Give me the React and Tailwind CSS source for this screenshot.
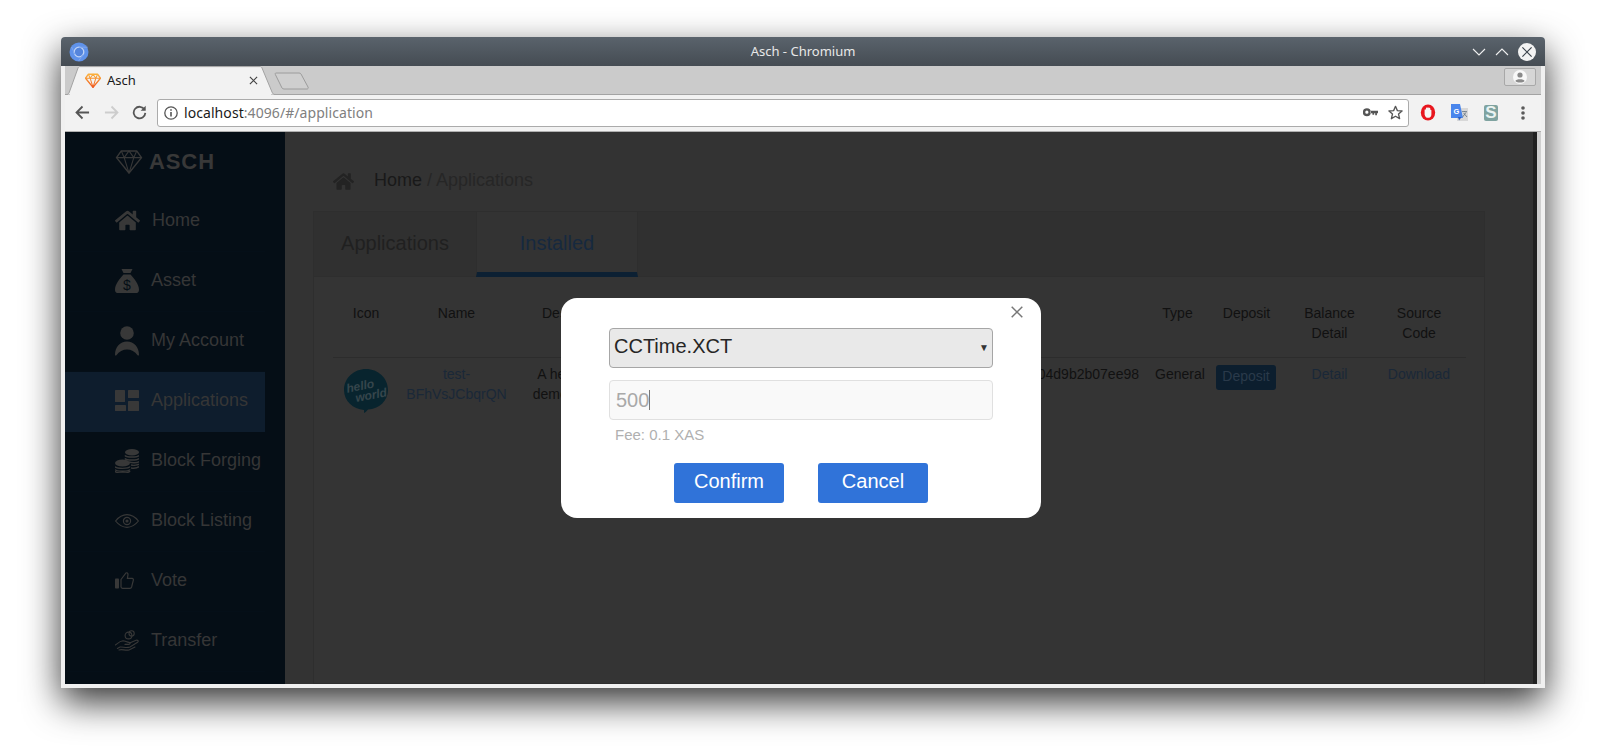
import React from "react";
import { FaHome } from "react-icons/fa";

const chromeFont = { fontFamily: '"Noto Sans", sans-serif' };

function Gem({ className, stroke, width = 1.5 }) {
  return (
    <svg viewBox="0 0 28 26" className={className} fill="none" stroke={stroke} strokeWidth={width} strokeLinejoin="round">
      <defs>
        <linearGradient id="gemGrad" x1="0" y1="0" x2="0" y2="1">
          <stop offset="0" stopColor="#fbb03b" />
          <stop offset="1" stopColor="#f0591f" />
        </linearGradient>
      </defs>
      <path d="M6 2 H22 L27 9 L14 25 L1 9 Z" />
      <path d="M1 9 H27 M9 9 L14 2 L19 9 M9 9 L14 25 L19 9 M6 2 L9 9 M22 2 L19 9" strokeWidth={width * 0.75} />
    </svg>
  );
}

const iconCls = "w-[24px] h-[24px] shrink-0";
const ic = "#383838";

function BagIcon() {
  return (
    <svg viewBox="0 0 24 24" className={iconCls} fill={ic}>
      <path d="M6.5 0 H17.5 L15.5 4 H8.5 Z" />
      <path d="M8.5 5.5 H15.5 C19 9.5 24 15 24 20.5 C24 22.5 23.5 23.5 22 24 H2 C.5 23.5 0 22.5 0 20.5 C0 15 5 9.5 8.5 5.5 Z" />
      <text x="12" y="21" textAnchor="middle" fontSize="14" fill="#050e16" fontFamily="Liberation Sans">$</text>
    </svg>
  );
}
function UserIcon() {
  return (
    <svg viewBox="0 0 24 30" className="w-[24px] h-[30px] shrink-0" fill={ic}>
      <circle cx="12" cy="7" r="6.8" />
      <path d="M0 29 C0 21 5 15.5 12 15.5 C19 15.5 24 21 24 29 C24 29.6 23 29.8 22.6 29.2 C20 25.5 16 23.5 12 23.5 C8 23.5 4 25.5 1.4 29.2 C1 29.8 0 29.6 0 29 Z" />
    </svg>
  );
}
function AppsIcon() {
  return (
    <svg viewBox="0 0 24 21" className="w-[24px] h-[21px] shrink-0" fill={ic}>
      <rect x="0" y="0" width="10" height="12" rx=".6" />
      <rect x="0" y="15" width="11" height="6" rx=".6" />
      <rect x="13" y="0" width="11" height="8" rx=".6" />
      <rect x="13" y="11" width="11" height="10" rx=".6" />
    </svg>
  );
}
function CoinsIcon() {
  return (
    <svg viewBox="0 0 24 24" className={iconCls} fill="none" stroke={ic} strokeWidth="1.4">
      <ellipse cx="17" cy="3.2" rx="7" ry="3.2" fill={ic} stroke="none" />
      <path d="M10 6.4 C11 8.6 23 8.6 24 6.4 M10 9.4 C11 11.6 23 11.6 24 9.4 M14 13 C17 14.2 23 14 24 12.4 M16 16 C19 16.8 23 16 24 15 M16 19 C19 19.4 23 18.6 24 17.6" />
      <ellipse cx="7.5" cy="14" rx="7.5" ry="3.6" fill={ic} stroke="none" />
      <path d="M0 17.6 C1 20 14 20 15 17.6 M0 20.4 C1 22.8 14 22.8 15 20.4 M0 22 C1 24.6 14 24.6 15 22" />
    </svg>
  );
}
function EyeIcon() {
  return (
    <svg viewBox="0 0 24 14" className="w-[24px] h-[14px] shrink-0" fill="none" stroke={ic} strokeWidth="1.2">
      <path d="M.6 7 C5 1.4 8.5 .7 12 .7 C15.5 .7 19 1.4 23.4 7 C19 12.6 15.5 13.3 12 13.3 C8.5 13.3 5 12.6 .6 7 Z" />
      <circle cx="12" cy="7" r="3.6" />
      <circle cx="12" cy="7" r="1" fill={ic} />
    </svg>
  );
}
function ThumbIcon() {
  return (
    <svg viewBox="0 0 19 17" className="w-[19px] h-[17px] shrink-0 mr-[5px]">
      <rect x="0" y="6.5" width="4" height="10" rx=".8" fill={ic} />
      <path d="M6 7.5 L11 1 C12 .4 13 1 13 2.5 L12.4 6.4 H17 C18.2 6.4 18.6 7.4 18.3 8.4 L16.6 15 C16.3 15.9 15.7 16.3 15 16.3 H7.6 C6.6 16.3 6 15.7 6 14.8 Z" fill="none" stroke={ic} strokeWidth="1.2" />
    </svg>
  );
}
function HandIcon() {
  return (
    <svg viewBox="0 0 24 21" className="w-[24px] h-[21px] shrink-0" fill="none" stroke={ic} strokeWidth="1.1" strokeLinecap="round">
      <circle cx="13.5" cy="5.5" r="3.4" />
      <circle cx="16.6" cy="3.4" r="2.6" />
      <path d="M.4 15 C3 13 5 11 8 10.8 C10 10.8 12 12.4 14 12.4 C15.6 12.4 15.6 14.4 13.6 14.4 H10" />
      <path d="M14.6 13 L21 10.2 C23 9.8 23.8 11.2 22.6 12.2 L15 17 C11 18.4 8 16.6 5 17 L2.4 18.4" />
      <path d="M4 20 C7 18.8 10 20.8 14 20 L20 17" />
    </svg>
  );
}

const navItems = [
  ["Home", <FaHome key="h" className="w-[25px] h-[25px] shrink-0" color={ic} />],
  ["Asset", <BagIcon key="a" />],
  ["My Account", <UserIcon key="u" />],
  ["Applications", <AppsIcon key="p" />],
  ["Block Forging", <CoinsIcon key="c" />],
  ["Block Listing", <EyeIcon key="e" />],
  ["Vote", <ThumbIcon key="t" />],
  ["Transfer", <HandIcon key="r" />],
];

function Sidebar() {
  return (
    <aside className="w-[220px] shrink-0 bg-[#050e16] overflow-hidden">
      <div className="h-[60px] pl-[50px] pb-[2px] flex items-center gap-[6px]">
        <Gem className="w-[28px] h-[25px] shrink-0" stroke="#383838" />
        <span className="text-[22px] font-bold text-[#383838] tracking-[0.9px]">ASCH</span>
      </div>
      {navItems.map(([label, icon]) => (
        <div
          key={label}
          className={
            "h-[60px] w-[200px] pl-[50px] pb-[2px] flex items-center gap-[12px] text-[18px] whitespace-nowrap text-[#363636] border-b " +
            (label === "Applications" ? "bg-[#0e1d2d] border-[#0e1d2d]" : "border-[#050f18]")
          }
        >
          {icon}
          <span>{label}</span>
        </div>
      ))}
    </aside>
  );
}

function HelloLogo() {
  return (
    <svg viewBox="0 0 44 44" className="w-[44px] h-[44px] mx-auto mt-[5px]">
      <path d="M22 0 C34 0 44 9 44 21 C44 32 35 40 24 40.5 C23 42 21 43.5 20 44 L20 41 C9 40 0 32 0 21 C0 9 10 0 22 0 Z" fill="#08242e" />
      <g transform="rotate(-11 22 21)" fill="#36464c" fontFamily="Liberation Sans" fontWeight="700" fontStyle="italic" fontSize="12">
        <text x="3" y="20">hello</text>
        <text x="10" y="31">world</text>
      </g>
    </svg>
  );
}

const colHead = "px-[8px] pt-[8px] pb-[14px] font-normal align-top text-center";
const cell = "px-[8px] pt-[6px] align-top text-center";
const link = "text-[#1a2838]";

function AppTable() {
  return (
    <table className="table-fixed w-[1133px] text-[14px] leading-[20px] text-[#111111]">
      <colgroup>
        <col className="w-[66px]" />
        <col className="w-[115px]" />
        <col className="w-[126px]" />
        <col className="w-[507px]" />
        <col className="w-[61px]" />
        <col className="w-[77px]" />
        <col className="w-[89px]" />
        <col className="w-[92px]" />
      </colgroup>
      <thead>
        <tr className="border-b border-[#2c2c2c]">
          <th className={colHead}>Icon</th>
          <th className={colHead}>Name</th>
          <th className={colHead}>Description</th>
          <th className={colHead}>Transaction ID</th>
          <th className={colHead}>Type</th>
          <th className={colHead}>Deposit</th>
          <th className={colHead}>Balance Detail</th>
          <th className={colHead + " !pr-[10px]"}>Source Code</th>
        </tr>
      </thead>
      <tbody>
        <tr>
          <td className={cell}><HelloLogo /></td>
          <td className={cell + " !px-0 " + link}>test-BFhVsJCbqrQN</td>
          <td className={cell}>A hello world demo for asch</td>
          <td className={cell + " text-right whitespace-nowrap"}>04d9b2b07ee98</td>
          <td className={cell + " !px-0 !pl-[5px] whitespace-nowrap"}>General</td>
          <td className={cell}>
            <span className="inline-block w-[60px] h-[25px] -ml-[1px] mt-[1px] leading-[19px] pt-[2px] rounded-[3px] bg-[#0c1e2e] text-[#2a3a4a]">Deposit</span>
          </td>
          <td className={cell + " " + link}>Detail</td>
          <td className={cell + " !pr-[10px] " + link}>Download</td>
        </tr>
      </tbody>
    </table>
  );
}

function MainArea() {
  return (
    <main className="flex-1 min-w-0 bg-[#333333] pl-[28px] pr-[48px] overflow-hidden">
      <div className="h-[79px] pt-[19px] pl-[20px] flex items-center gap-[20px] text-[18px]">
        <FaHome className="w-[21px] h-[21px]" color="#232323" />
        <div className="-mt-[1px]">
          <span className="text-[#191919]">Home</span>
          <span className="text-[#262626]"> / Applications</span>
        </div>
      </div>
      <section className="h-[473px] bg-[#343434] border border-[#2e2e2e]">
        <div className="h-[65px] bg-[#303030] border-b border-[#2e2e2e] flex text-[20px]">
          <div className="w-[162px] flex items-center justify-center pb-[2px] text-[#202020]">Applications</div>
          <div className="w-[162px] h-[65px] flex items-center justify-center pt-[1px] bg-[#333333] border-x border-[#2e2e2e] border-b-[5px] border-b-[#0c2033] text-[#16293f]">Installed</div>
        </div>
        <div className="pt-[18px] pl-[19px]">
          <AppTable />
        </div>
      </section>
    </main>
  );
}

function Modal() {
  return (
    <div className="relative w-[480px] h-[220px] bg-white rounded-[16px] px-[48px] pt-[30px] flex flex-col" style={{ fontFamily: '"Liberation Sans", sans-serif' }}>
      <svg viewBox="0 0 12 12" className="absolute right-[18px] top-[8px] w-[12px] h-[12px]" stroke="#777" strokeWidth="1.5">
        <path d="M.7 .7 L11.3 11.3 M11.3 .7 L.7 11.3" />
      </svg>
      <div className="h-[40px] rounded-[4px] border border-[#a6a6a6] bg-[#e9e9e9] flex items-center justify-between pl-[4px] pr-[3px] pb-[5px] text-[20px] text-[#262626]">
        <span>CCTime.XCT</span>
        <span className="text-[10px] leading-none mt-[5px] text-[#333]">▼</span>
      </div>
      <div className="mt-[12px] h-[40px] rounded-[4px] border border-[#e0e0e0] bg-[#f9f9f9] flex items-center pl-[6px] pb-[1px] text-[20px] text-[#a9a9a9]">
        <span>500</span>
        <span className="w-px h-[20px] bg-[#777]" />
      </div>
      <div className="mt-[6px] pl-[6px] text-[15px] leading-[18px] text-[#b0b0b0]">Fee: 0.1 XAS</div>
      <div className="mt-[19px] flex justify-center gap-[34px]">
        <div className="w-[110px] h-[40px] rounded-[3px] bg-[#3073d9] text-white text-[20px] flex items-center justify-center pb-[5px]">Confirm</div>
        <div className="w-[110px] h-[40px] rounded-[3px] bg-[#3073d9] text-white text-[20px] flex items-center justify-center pb-[5px]">Cancel</div>
      </div>
    </div>
  );
}

function TitleBar() {
  return (
    <div className="relative h-[29px] shrink-0 rounded-t-[4px] bg-gradient-to-b from-[#5a636c] to-[#454c53] flex items-center justify-between pl-[8px] pr-[9px]">
      <svg viewBox="0 0 20 20" className="w-[20px] h-[20px]">
        <circle cx="10" cy="10" r="9.5" fill="#5f92ea" />
        <circle cx="10" cy="10" r="4.8" fill="#5585dc" stroke="#c0d4f6" strokeWidth="1.3" />
        <path d="M10 5.2 H18.6 M6 12.6 L2.6 5 M14 12.6 L9.6 19" stroke="#7fa6ec" strokeWidth="1" />
      </svg>
      <div className="absolute inset-x-0 text-center text-[13px] text-[#e8e8e8]" style={chromeFont}>Asch - Chromium</div>
      <div className="relative flex items-center gap-[9px]">
        <svg viewBox="0 0 14 8" className="w-[14px] h-[8px]" fill="none" stroke="#f0f0f0" strokeWidth="1.1"><path d="M1 1 L7 7 L13 1" /></svg>
        <svg viewBox="0 0 14 8" className="w-[14px] h-[8px]" fill="none" stroke="#f0f0f0" strokeWidth="1.1"><path d="M1 7 L7 1 L13 7" /></svg>
        <svg viewBox="0 0 18 18" className="w-[18px] h-[18px]">
          <circle cx="9" cy="9" r="9" fill="#f2f2f2" />
          <path d="M4.4 4.4 L13.6 13.6 M13.6 4.4 L4.4 13.6" stroke="#3c444c" strokeWidth="1.2" />
        </svg>
      </div>
    </div>
  );
}

function TabStrip() {
  return (
    <div className="relative h-[29px] shrink-0 bg-[#cbcbcb] border-b border-[#a3a3a3] flex">
      <div className="relative w-[212px] h-[29px] flex items-center pl-[20px] -mb-px">
        <svg viewBox="0 0 212 29" className="absolute left-0 top-0 w-[212px] h-[29px]">
          <path d="M0 28.5 H1 C3 28.5 3.6 28 4.4 26 L13 2 C13.5 1 14 .6 15 .6 H195 C196 .6 196.5 1 197 2 L207 26 C207.8 28 208.6 28.5 211 28.5" fill="#f2f2f2" stroke="#a3a3a3" />
          <rect x="5" y="27" width="201" height="2" fill="#f2f2f2" />
        </svg>
        <Gem className="relative w-[16px] h-[15px]" stroke="url(#gemGrad)" width={2.4} />
        <span className="relative ml-[6px] text-[13px] text-[#1a1a1a]" style={chromeFont}>Asch</span>
        <svg viewBox="0 0 10 10" className="absolute left-[184px] top-[10px] w-[9px] h-[9px]" stroke="#444" strokeWidth="1.3">
          <path d="M1 1 L9 9 M9 1 L1 9" />
        </svg>
      </div>
      <svg viewBox="0 0 36 18" className="absolute left-[209px] top-[6px] w-[36px] h-[18px]" fill="#cfcfcf" stroke="#9c9c9c">
        <path d="M2 1 H25 C26 1 26.6 1.4 27 2 L34 15 C34.6 16.2 34 17 33 17 H10 C9 17 8.4 16.6 8 16 L1.4 2.6 C1 1.6 1.2 1 2 1 Z" />
      </svg>
      <div className="ml-auto mr-[5px] mt-[2px] w-[32px] h-[18px] rounded-[2px] bg-[#d6d6d6] border border-[#a8a8a8] flex items-center justify-center">
        <svg viewBox="0 0 14 14" className="w-[14px] h-[14px]">
          <circle cx="7" cy="7" r="7" fill="#f8f8f8" />
          <circle cx="7" cy="5" r="2.6" fill="#8a8a8a" />
          <path d="M2.4 11 C3 8.6 11 8.6 11.6 11 C10 13 4 13 2.4 11 Z" fill="#8a8a8a" />
        </svg>
      </div>
    </div>
  );
}

function Toolbar() {
  return (
    <div className="h-[37px] shrink-0 bg-[#f2f2f2] border-b border-[#b0b0b0] flex items-center pl-[10px] pb-[1px]">
      <svg viewBox="0 0 16 16" className="w-[15px] h-[15px]" fill="none" stroke="#555" strokeWidth="1.9">
        <path d="M15 8 H2 M8 1.6 L1.6 8 L8 14.4" />
      </svg>
      <svg viewBox="0 0 16 16" className="w-[15px] h-[15px] ml-[14px]" fill="none" stroke="#cdcdcd" strokeWidth="1.9">
        <path d="M1 8 H14 M8 1.6 L14.4 8 L8 14.4" />
      </svg>
      <svg viewBox="0 0 16 16" className="w-[15px] h-[15px] ml-[13px]" fill="none" stroke="#555" strokeWidth="1.9">
        <path d="M13.4 5 A6.2 6.2 0 1 0 14.2 8.4" />
        <path d="M14.6 .8 V6.2 H9.2 Z" fill="#555" stroke="none" />
      </svg>
      <div className="ml-[10px] w-[1252px] h-[28px] bg-white border border-[#ababab] rounded-[3px] flex items-center pl-[6px] pr-[5px]">
        <svg viewBox="0 0 14 14" className="w-[14px] h-[14px] shrink-0" fill="none" stroke="#555" strokeWidth="1.3">
          <circle cx="7" cy="7" r="6.2" />
          <path d="M7 6 V10.6 M7 3.2 V4.8" strokeWidth="1.6" />
        </svg>
        <div className="ml-[6px] text-[14px] flex-1 whitespace-nowrap tracking-[0.07px]" style={chromeFont}>
          <span className="text-[#1a1a1a]">localhost</span>
          <span className="text-[#808080]">:4096/#/application</span>
        </div>
        <svg viewBox="0 0 14 8" className="w-[15px] h-[9px] -ml-[1px] shrink-0" fill="#555">
          <path d="M3.6 0 A3.6 3.6 0 1 1 3.6 7.4 A3.6 3.6 0 1 1 3.6 0 Z M3.6 2.2 A1.5 1.5 0 1 0 3.6 5.2 A1.5 1.5 0 1 0 3.6 2.2 Z M6.8 2.4 H14 V4.6 H13 V6.6 H11.4 V4.6 H10.4 V6 H8.8 V4.6 H6.8 Z" fillRule="evenodd" />
        </svg>
        <svg viewBox="0 0 16 16" className="w-[15px] h-[15px] ml-[10px] shrink-0" fill="none" stroke="#555" strokeWidth="1.4" strokeLinejoin="round">
          <path d="M8 1.4 L10 6 L15 6.4 L11.2 9.6 L12.4 14.6 L8 12 L3.6 14.6 L4.8 9.6 L1 6.4 L6 6 Z" />
        </svg>
      </div>
      <svg viewBox="0 0 16 18" className="w-[16px] h-[17px] ml-[11px] shrink-0">
        <ellipse cx="8" cy="9" rx="7.6" ry="8.6" fill="#e8171f" />
        <path d="M4.4 11 V6.4 C4.4 5.4 5.8 5.4 5.8 6.4 V4.4 C5.8 3.4 7.2 3.4 7.2 4.4 C7.2 3.2 8.8 3.2 8.8 4.4 C8.8 3.8 10.4 3.8 10.4 4.8 V6.4 C10.4 5.8 11.6 5.8 11.6 6.6 V11 C11.6 13.4 10 14.6 8 14.6 C6 14.6 4.8 13 4.4 11 Z" fill="#f6f6f6" />
      </svg>
      <svg viewBox="0 0 17 17" className="w-[17px] h-[17px] ml-[15px] shrink-0">
        <rect x="6" y="4" width="11" height="13" fill="#d8d8d8" />
        <path d="M0 0 H9 L12 14 H0 Z" fill="#4a86ec" />
        <path d="M7 13 L10.6 13 L8 16.4 Z" fill="#2d5fc0" />
        <text x="2.4" y="9.5" fontSize="7.5" fontWeight="700" fill="#fff" fontFamily="Liberation Sans">G</text>
        <path d="M11 7.6 H16 M13.4 7 V8 M11.6 13 L15 8.4 M12.6 9 L16 13" stroke="#6c7a88" strokeWidth=".9" fill="none" />
      </svg>
      <div className="ml-[16px] w-[14px] h-[16px] shrink-0 rounded-[2px] bg-[#7fa3a0] text-[#eaf3f2] text-[17px] font-bold leading-[16px] text-center" style={{ fontFamily: '"Liberation Sans", sans-serif' }}>S</div>
      <svg viewBox="0 0 4 14" className="w-[4px] h-[14px] ml-[23px] shrink-0" fill="#5a5a5a">
        <circle cx="2" cy="2" r="1.8" /><circle cx="2" cy="7" r="1.8" /><circle cx="2" cy="12" r="1.8" />
      </svg>
    </div>
  );
}

export default function App() {
  return (
    <div className="w-[1606px] h-[749px] overflow-hidden bg-white pt-[37px] pl-[61px]" style={{ fontFamily: '"Liberation Sans", sans-serif' }}>
      <div className="w-[1484px] h-[651px] flex flex-col rounded-t-[4px] shadow-[0_14px_36px_rgba(0,0,0,0.8)]">
        <TitleBar />
        <div className="flex-1 min-h-0 flex flex-col border-x-4 border-b-4 border-[#f0f0f0] bg-[#f0f0f0]">
          <TabStrip />
          <Toolbar />
          <div className="flex-1 min-h-0 flex">
            <div className="relative flex-1 min-w-0 flex">
              <Sidebar />
              <MainArea />
              <div className="w-[4px] shrink-0 bg-[#212121]" />
              <div className="absolute inset-0 flex items-center justify-center">
                <Modal />
              </div>
            </div>
            <div className="w-[4px] shrink-0 bg-[#cfcfcf]" />
          </div>
        </div>
      </div>
    </div>
  );
}
